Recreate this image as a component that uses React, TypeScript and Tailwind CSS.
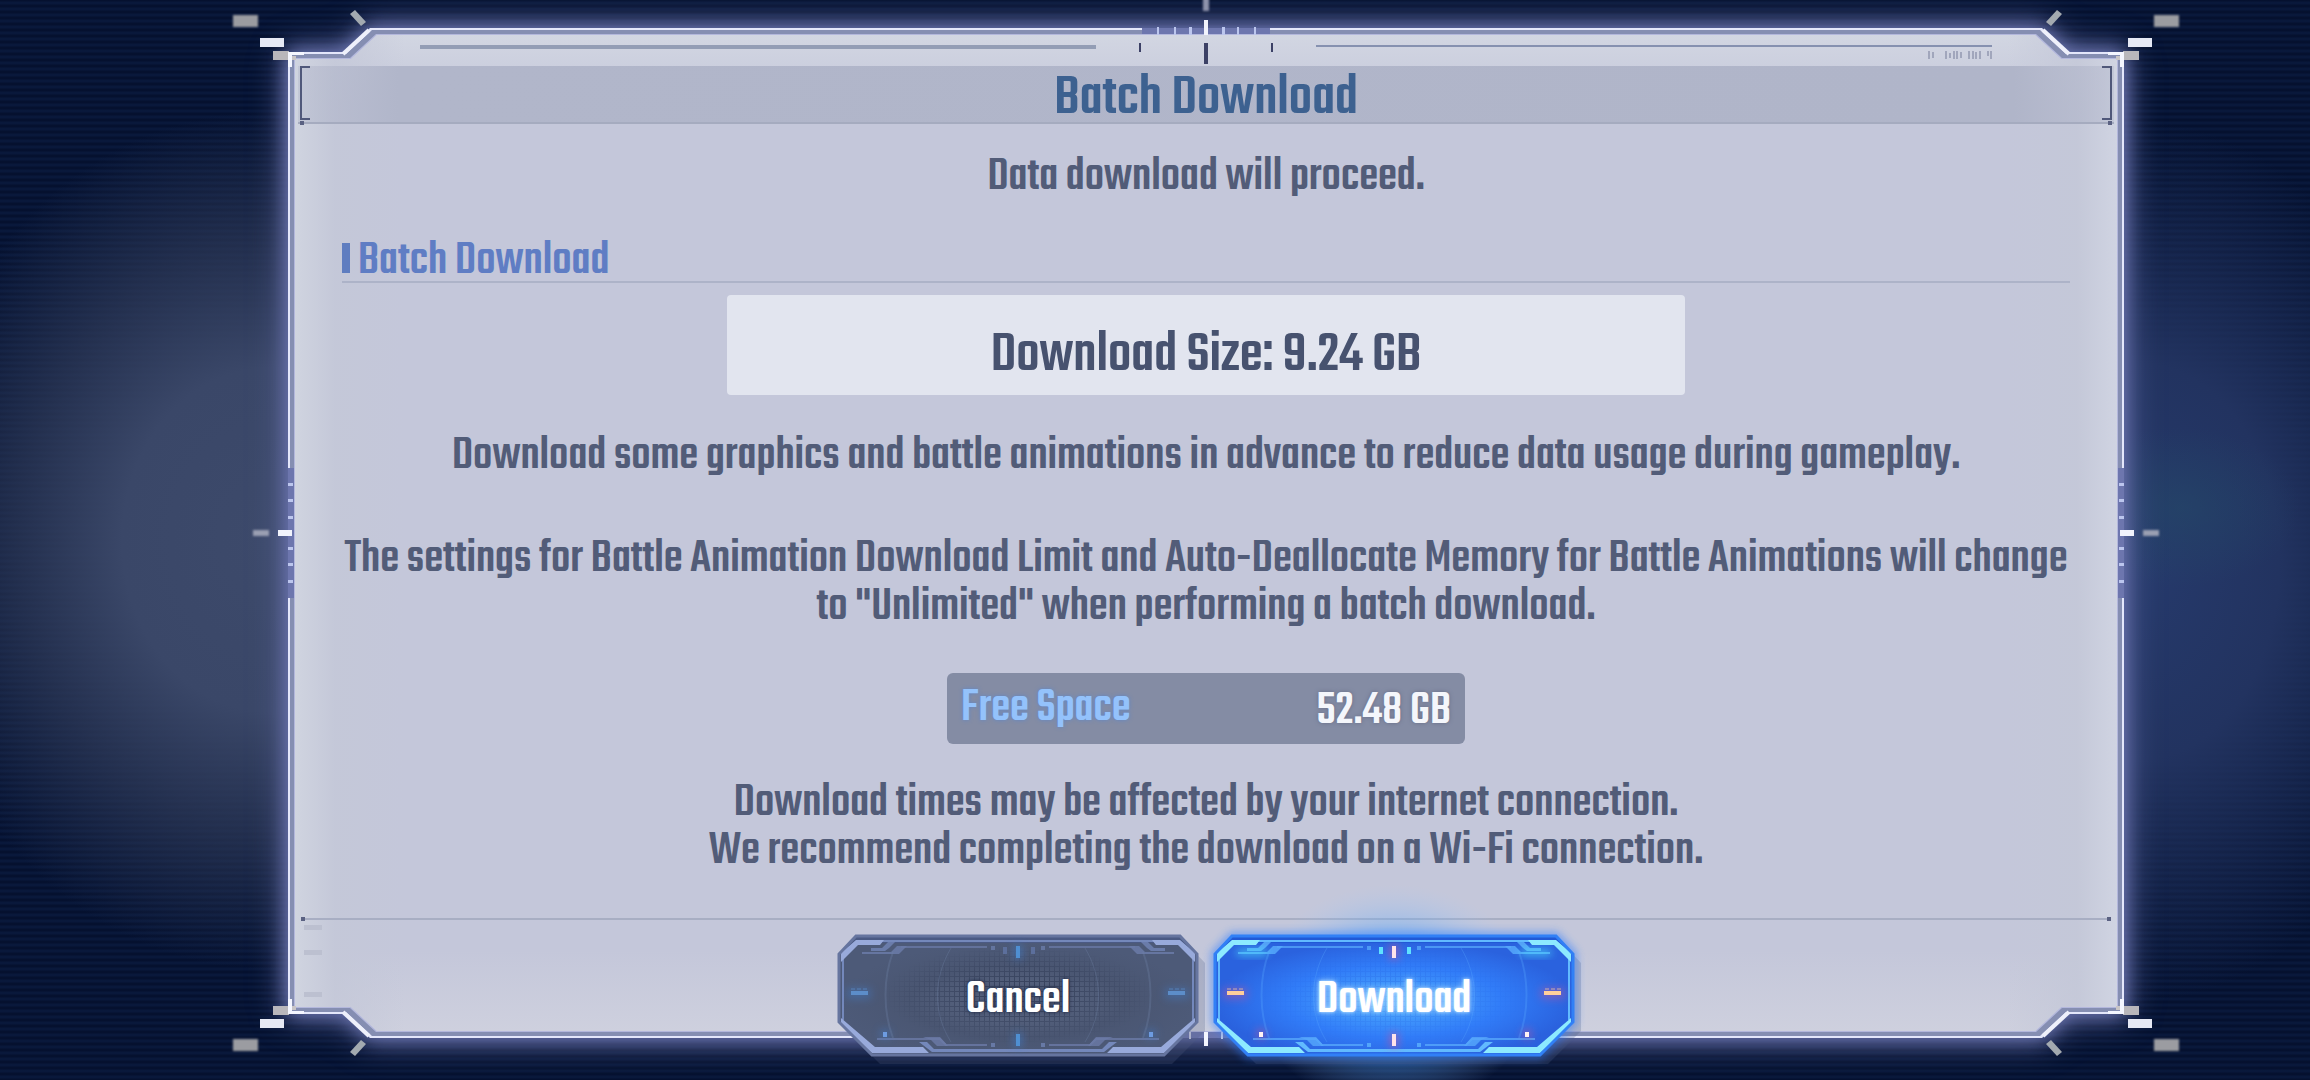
import React from "react";

const FRAME =
  "[clip-path:polygon(0_24px,56px_24px,82px_0,calc(100%-82px)_0,calc(100%-56px)_24px,100%_24px,100%_calc(100%-24px),calc(100%-56px)_calc(100%-24px),calc(100%-82px)_100%,82px_100%,56px_calc(100%-24px),0_calc(100%-24px))]";

function Corner({ className }: { className: string }) {
  return (
    <svg aria-hidden="true" className={`absolute ${className}`} width="160" height="80" viewBox="-60 -20 160 80">
      <defs>
        <filter id="soft" x="-30%" y="-50%" width="160%" height="200%">
          <feGaussianBlur stdDeviation="1.3" />
        </filter>
      </defs>
      <rect x="-55" y="-13" width="25" height="12" fill="#9b9ca1" filter="url(#soft)" />
      <rect x="-28" y="10" width="24" height="9" fill="#e6e9f4" />
      <rect x="-15" y="23" width="16" height="9" fill="#b9b7bb" />
      <path d="M62 -14 L67 -18 L78 -6 L73 -2 Z" fill="#a3aab0" />
      <path d="M0 24 H16 V27 H4 V39 H0 Z" fill="#f4f6ff" />
      <path d="M4 28 H8 V32 H4 Z" fill="#c9c5c6" />
      <path d="M55 26 L81 2" stroke="#eef0fb" strokeWidth="4" />
    </svg>
  );
}

function SideTicks({ className }: { className: string }) {
  return (
    <svg aria-hidden="true" className={`absolute top-1/2 -translate-y-1/2 ${className}`} width="50" height="130" viewBox="-40 -65 50 130">
      <rect x="0" y="-65" width="6" height="130" fill="#6d76ae" />
      {[-49, -33, -16, 15, 31, 48].map((y) => (
        <rect key={y} x="0" y={y - 1} width="5" height="3" fill="#bcc6ee" />
      ))}
      <rect x="-10" y="-3" width="14" height="6" fill="#f1f3fc" />
      <rect x="-35" y="-3" width="16" height="6" fill="#9a9fb2" filter="url(#soft)" />
    </svg>
  );
}

function TopTicks() {
  return (
    <svg aria-hidden="true" className="absolute left-1/2 -top-7 -translate-x-1/2" width="140" height="66" viewBox="-70 -28 140 66">
      <rect x="-64" y="0" width="128" height="6" fill="#6d76ae" />
      {[-49, -32, -17, 16, 31, 48].map((x) => (
        <rect key={x} x={x} y="-1" width={Math.abs(x) < 20 ? 3 : 2} height="8" fill="#bcc6ee" />
      ))}
      <rect x="-2" y="-8" width="4" height="15" fill="#f1f3fc" />
      <rect x="-3" y="-30" width="6" height="13" fill="#8e93ab" filter="url(#soft)" />
      <rect x="-67" y="15" width="2" height="9" fill="#3c4166" />
      <rect x="65" y="15" width="2" height="9" fill="#3c4166" />
      <rect x="-2" y="15" width="4" height="21" fill="#3c4166" />
    </svg>
  );
}

function BottomTicks() {
  return (
    <svg aria-hidden="true" className="absolute left-1/2 -bottom-2 -translate-x-1/2" width="130" height="16" viewBox="-65 -8 130 16">
      <rect x="-64" y="-6" width="128" height="6" fill="#6d76ae" />
      <rect x="-17" y="-6" width="2" height="7" fill="#c9cde2" />
      <rect x="15" y="-6" width="2" height="7" fill="#c9cde2" />
      <rect x="-2" y="-6" width="4" height="14" fill="#f4f6ff" />
    </svg>
  );
}

type Skin = {
  id: string;
  edge: string;
  center: string;
  mid: string;
  rim: string;
  dark: string;
  bright: string;
  line: string;
  thick: string;
  grid: string;
  arc: string;
  side: string;
  tick: string;
  minor: string;
  dot: string;
  halo: string;
};

const DARK: Skin = {
  id: "dark",
  edge: "#4d5a78",
  mid: "#4a5672",
  center: "#5d6985",
  rim: "#66759f",
  dark: "#4b5a84",
  bright: "#98aadb",
  line: "#7488bb",
  thick: "#6b7ba8",
  grid: "#2f3a55",
  arc: "#7184a8",
  side: "#5c8dc9",
  tick: "#4f8fd2",
  minor: "#5c6f9c",
  dot: "#6d9be0",
  halo: "#3f7fd0",
};

const BLUE: Skin = {
  id: "blue",
  edge: "#2a62de",
  mid: "#317cf8",
  center: "#4fb0ff",
  rim: "#3180f6",
  dark: "#2159d6",
  bright: "#8deaff",
  line: "#62baff",
  thick: "#56a8fb",
  grid: "#2360e0",
  arc: "#5aa8ff",
  side: "#ffcf9b",
  tick: "#ffe3ea",
  minor: "#5fe2ff",
  dot: "#fff3f3",
  halo: "#e0508c",
};

const PLATE = "M17 0 H341 L358 18 V86 L325 119 H33 L0 86 V18 Z";

function PlateHalf({ s }: { s: Skin }) {
  return (
    <>
      <path d="M3 19 L18 4 H179" fill="none" stroke={s.dark} strokeWidth="6" />
      <path d="M42 5 H179" stroke={s.line} strokeWidth="2" fill="none" />
      <path d="M4 20 V84" stroke={s.line} strokeWidth="2" fill="none" />
      <path d="M2 17 L17 4 H45 L41 9 H19 L2 26 Z" fill={s.bright} />
      <path d="M32 12 H43 L50 5 H57 L50 12 L46 15 H32 Z" fill={s.line} opacity="0.75" />
      <path d="M23 16 H52 L58 10 H68 L60 18 H23 Z" fill={s.thick} opacity="0.85" />
      <path d="M62 11 H148" stroke={s.thick} strokeWidth="2" opacity="0.75" />
      <path d="M2 82 L2 89 L33 117 H90 L84 111 H36 Z" fill={s.bright} />
      <path d="M80 106 H88 L95 113 H179 V116 H93 Z" fill={s.line} />
      <path d="M38 103 H101 L107 109 H148" stroke={s.thick} strokeWidth="2" fill="none" opacity="0.8" />
      <path d="M84 101 H101 L109 110 H98 L92 104 Z" fill={s.thick} opacity="0.8" />
      <rect x="152" y="10" width="4" height="4" fill={s.line} opacity="0.6" />
      <rect x="152" y="107" width="4" height="4" fill={s.line} opacity="0.7" />
      <rect x="8" y="52" width="24" height="11" fill={s.halo} opacity="0.4" filter={`url(#b-${s.id})`} />
      <rect x="12" y="55" width="17" height="4" fill={s.side} />
      <path d="M12 53 H29" stroke={s.side} strokeWidth="1" strokeDasharray="4 2" opacity="0.7" />
      <circle cx="46" cy="98" r="5" fill={s.halo} opacity="0.5" filter={`url(#b-${s.id})`} />
      <rect x="44" y="96" width="4" height="5" fill={s.dot} />
      <path d="M54 16 C44 42 44 76 54 102" stroke={s.arc} strokeWidth="2" opacity="0.3" fill="none" />
      <path d="M112 12 C94 42 94 78 112 106" stroke={s.arc} strokeWidth="1" opacity="0.3" fill="none" />
    </>
  );
}

function Plate({ s, lit }: { s: Skin; lit: boolean }) {
  return (
    <svg aria-hidden="true" className="pointer-events-none absolute inset-0 h-full w-full overflow-visible" viewBox="0 0 358 119" preserveAspectRatio="none">
      <defs>
        <radialGradient id={`f-${s.id}`} cx="0.5" cy="0.55" r="0.5">
          <stop offset="0" stopColor={s.center} />
          <stop offset="0.6" stopColor={s.mid} />
          <stop offset="1" stopColor={s.edge} />
        </radialGradient>
        <radialGradient id={`m-${s.id}`}>
          <stop offset="0.3" stopColor="#fff" />
          <stop offset="1" stopColor="#000" />
        </radialGradient>
        <radialGradient id={`h-${s.id}`}>
          <stop offset="0" stopColor="#2c8dff" stopOpacity="0.9" />
          <stop offset="0.6" stopColor="#4fa4ff" stopOpacity="0.35" />
          <stop offset="1" stopColor="#a5ccff" stopOpacity="0" />
        </radialGradient>
        <pattern id={`g-${s.id}`} width="5" height="5" patternUnits="userSpaceOnUse">
          <path d="M0 0 H5 M0 0 V5" stroke={s.grid} strokeWidth="2" />
        </pattern>
        <mask id={`k-${s.id}`}>
          <rect x="44" y="10" width="270" height="98" fill={`url(#m-${s.id})`} />
        </mask>
        <filter id={`b-${s.id}`} x="-100%" y="-100%" width="300%" height="300%">
          <feGaussianBlur stdDeviation="4" />
        </filter>
      </defs>
      {lit && <ellipse cx="179" cy="60" rx="140" ry="112" fill={`url(#h-${s.id})`} />}
      <path d={PLATE} transform="translate(8 9)" fill="#535f84" opacity="0.25" />
      {lit && <path d={PLATE} fill="none" stroke="#2f7dff" strokeWidth="7" opacity="0.65" filter={`url(#b-${s.id})`} />}
      <path d={PLATE} fill={`url(#f-${s.id})`} />
      <rect x="44" y="10" width="270" height="98" fill={`url(#g-${s.id})`} mask={`url(#k-${s.id})`} opacity={lit ? 0.3 : 0.7} />
      <PlateHalf s={s} />
      <g transform="translate(358 0) scale(-1 1)">
        <PlateHalf s={s} />
      </g>
      <path d={PLATE} fill="none" stroke={s.rim} strokeWidth="3" />
      {lit && (
        <g fill="#4ff0ff" filter={`url(#b-${s.id})`} opacity="0.8">
          <rect x="22" y="14" width="30" height="5" />
          <rect x="306" y="14" width="30" height="5" />
        </g>
      )}
      <g fill={s.halo} opacity="0.6" filter={`url(#b-${s.id})`}>
        <rect x="175" y="9" width="8" height="14" />
        <rect x="175" y="97" width="8" height="14" />
      </g>
      <rect x="177" y="10" width="4" height="12" fill={s.tick} />
      <rect x="177" y="98" width="4" height="12" fill={s.tick} />
      <rect x="164" y="11" width="4" height="7" fill={s.minor} />
      <rect x="192" y="11" width="4" height="7" fill={s.minor} />
    </svg>
  );
}

function ActionButton({ label, skin, lit, textClass }: { label: string; skin: Skin; lit: boolean; textClass: string }) {
  return (
    <button type="button" className="relative h-[119px] w-[358px] cursor-pointer">
      <Plate s={skin} lit={lit} />
      <span className={`relative block pt-2.5 text-5xl leading-[48px] font-medium text-white ${textClass}`}>{label}</span>
    </button>
  );
}

export default function App() {
  return (
    <div
      className={
        "flex min-h-screen flex-col overflow-hidden bg-[#040f2d] font-['Teko','Khand','Roboto_Condensed',sans-serif] " +
        "bg-[radial-gradient(ellipse_120px_80px_at_2180px_47%,rgba(36,72,104,0.6),transparent),radial-gradient(ellipse_370px_430px_at_270px_50%,#3d4a6b_0%,#3a4768_40%,rgba(45,57,88,0.75)_68%,transparent_100%),radial-gradient(ellipse_310px_440px_at_2140px_52%,#263a6c_0%,#223360_45%,transparent_100%),repeating-linear-gradient(to_bottom,#040f2c_0px,#0a1a3e_3px,#040f2c_6px)]"
      }
    >
      <main className="relative mt-7 mr-[186px] mb-[42px] ml-[288px] flex flex-1 flex-col" role="dialog" aria-labelledby="dialog-title">
        <div className="pointer-events-none absolute inset-0 [filter:drop-shadow(0_0_9px_#6d76b2)_drop-shadow(0_0_15px_#5f699f)]">
          <div className={`absolute inset-0 bg-[#e4e7fb] ${FRAME}`} />
        </div>
        <div className={`pointer-events-none absolute inset-[2px] bg-[#858eb2] ${FRAME}`} />
        <div className={`pointer-events-none absolute inset-[6px] bg-[#b3b7dc] ${FRAME}`} />
        <div
          className={`pointer-events-none absolute inset-[7px] bg-[#c4c7da] bg-[linear-gradient(to_right,#d0d4e0,rgba(196,200,216,0.8)_40px,transparent_110px),linear-gradient(to_left,#d0d4e2,rgba(196,200,216,0.8)_40px,transparent_110px),linear-gradient(to_bottom,#d2d6e2,transparent_70px),linear-gradient(to_top,#ced0de,transparent_80px)] ${FRAME}`}
        />
        <Corner className="-top-5 -left-[60px]" />
        <Corner className="-top-5 -right-[60px] -scale-x-100" />
        <Corner className="-bottom-5 -left-[60px] -scale-y-100" />
        <Corner className="-right-[60px] -bottom-5 -scale-100" />
        <SideTicks className="-left-10" />
        <SideTicks className="-right-10 -scale-x-100" />
        <TopTicks />
        <BottomTicks />

        <div className="relative flex h-[38px] items-start justify-between pr-[132px] pl-[132px] pt-[17px]" aria-hidden="true">
          <div className="h-1 w-[43%] bg-[#939db5]" />
          <div className="w-[43%]">
            <div className="h-0.5 bg-[#8691b0]" />
            <svg className="mt-1 ml-auto" width="64" height="8" viewBox="0 0 64 8">
              <path
                d="M1 0V8 M5 1V7 M18 0V8 M22 2V7 M26 0V8 M29 0V8 M33 1V7 M41 0V8 M45 0V8 M48 1V8 M52 0V8 M60 0V5 M63 0V8"
                stroke="#9298b0"
                strokeWidth="2"
                opacity="0.75"
                filter="url(#faint)"
              />
              <filter id="faint">
                <feGaussianBlur stdDeviation="0.6" />
              </filter>
            </svg>
          </div>
        </div>

        <header className="relative mx-[10px] h-[58px] border-b-2 border-[#a5abbf] bg-[linear-gradient(to_right,rgba(176,181,201,0.4),#b1b6ca_100px,#b0b5c9_calc(100%-100px),rgba(176,181,201,0.4))]">
          <h1 id="dialog-title" className="pt-1 text-center text-[58px] leading-[58px] font-medium text-[#3d6190]">
            Batch Download
          </h1>
          <span className="absolute top-0 left-0.5 h-[54px] w-[10px] border-y-2 border-l-2 border-[#50587a]" />
          <span className="absolute top-0 right-0.5 h-[54px] w-[10px] border-y-2 border-r-2 border-[#50587a]" />
          <span className="absolute -bottom-[3px] left-0.5 size-1 bg-[#5a6182]" />
          <span className="absolute right-0.5 -bottom-[3px] size-1 bg-[#5a6182]" />
        </header>

        <div className="relative flex flex-1 flex-col px-[54px] text-center text-5xl leading-[48px] font-medium text-[#525c78]">
          <p className="mt-6 pt-1.5">Data download will proceed.</p>
          <div className="mt-8 flex items-center gap-2 border-b-2 border-[#adb3c8] pb-[3px]">
            <span className="mt-1 h-[30px] w-2 bg-[#5f7dc0]" />
            <h2 className="h-11 pt-1 text-[#5f7dc4]">Batch Download</h2>
          </div>
          <p className="mx-auto mt-3 h-[100px] w-[958px] max-w-full rounded-sm bg-[#e2e5ef] pt-8 text-[58px] leading-[58px] text-[#47526f]">
            Download Size: 9.24 GB
          </p>
          <p className="mt-9 pt-0.5">Download some graphics and battle animations in advance to reduce data usage during gameplay.</p>
          <p className="-mx-4 mt-[55px]">
            The settings for Battle Animation Download Limit and Auto-Deallocate Memory for Battle Animations will change
            <br />
            to "Unlimited" when performing a batch download.
          </p>
          <dl className="mx-auto mt-[41px] flex h-[71px] w-[518px] items-center justify-between rounded-md bg-[#848ca4] px-[14px]">
            <dt className="text-[#94c2fb] [text-shadow:0_0_4px_#5f87c8]">Free Space</dt>
            <dd className="pt-1.5 text-[#f4f6fb] [text-shadow:0_0_4px_#666c86]">52.48 GB</dd>
          </dl>
          <p className="mt-9">
            Download times may be affected by your internet connection.
            <br />
            We recommend completing the download on a Wi-Fi connection.
          </p>
        </div>

        <footer className="relative -mb-[17px]">
          <div className="mx-[13px] flex items-center justify-between">
            <span className="size-1 bg-[#5a6182]" />
            <span className="h-0.5 flex-1 bg-[#a8aec3]" />
            <span className="size-1 bg-[#5a6182]" />
          </div>
          <div className="absolute top-2 left-4 flex flex-col" aria-hidden="true">
            <span className="h-[5px] w-[18px] bg-[#bcc0d0]" />
            <span className="mt-5 h-[5px] w-[18px] bg-[#bcc0d0]" />
            <span className="mt-[37px] h-[5px] w-[18px] bg-[#bcc0d0]" />
          </div>
          <div className="mt-[15px] flex justify-center gap-[18px]">
            <ActionButton label="Cancel" skin={DARK} lit={false} textClass="[text-shadow:0_0_3px_#2b3550,0_0_5px_#2b3550]" />
            <ActionButton label="Download" skin={BLUE} lit={true} textClass="[text-shadow:0_0_3px_#bfe3ff,0_0_7px_#9fd0ff]" />
          </div>
        </footer>
      </main>
    </div>
  );
}
